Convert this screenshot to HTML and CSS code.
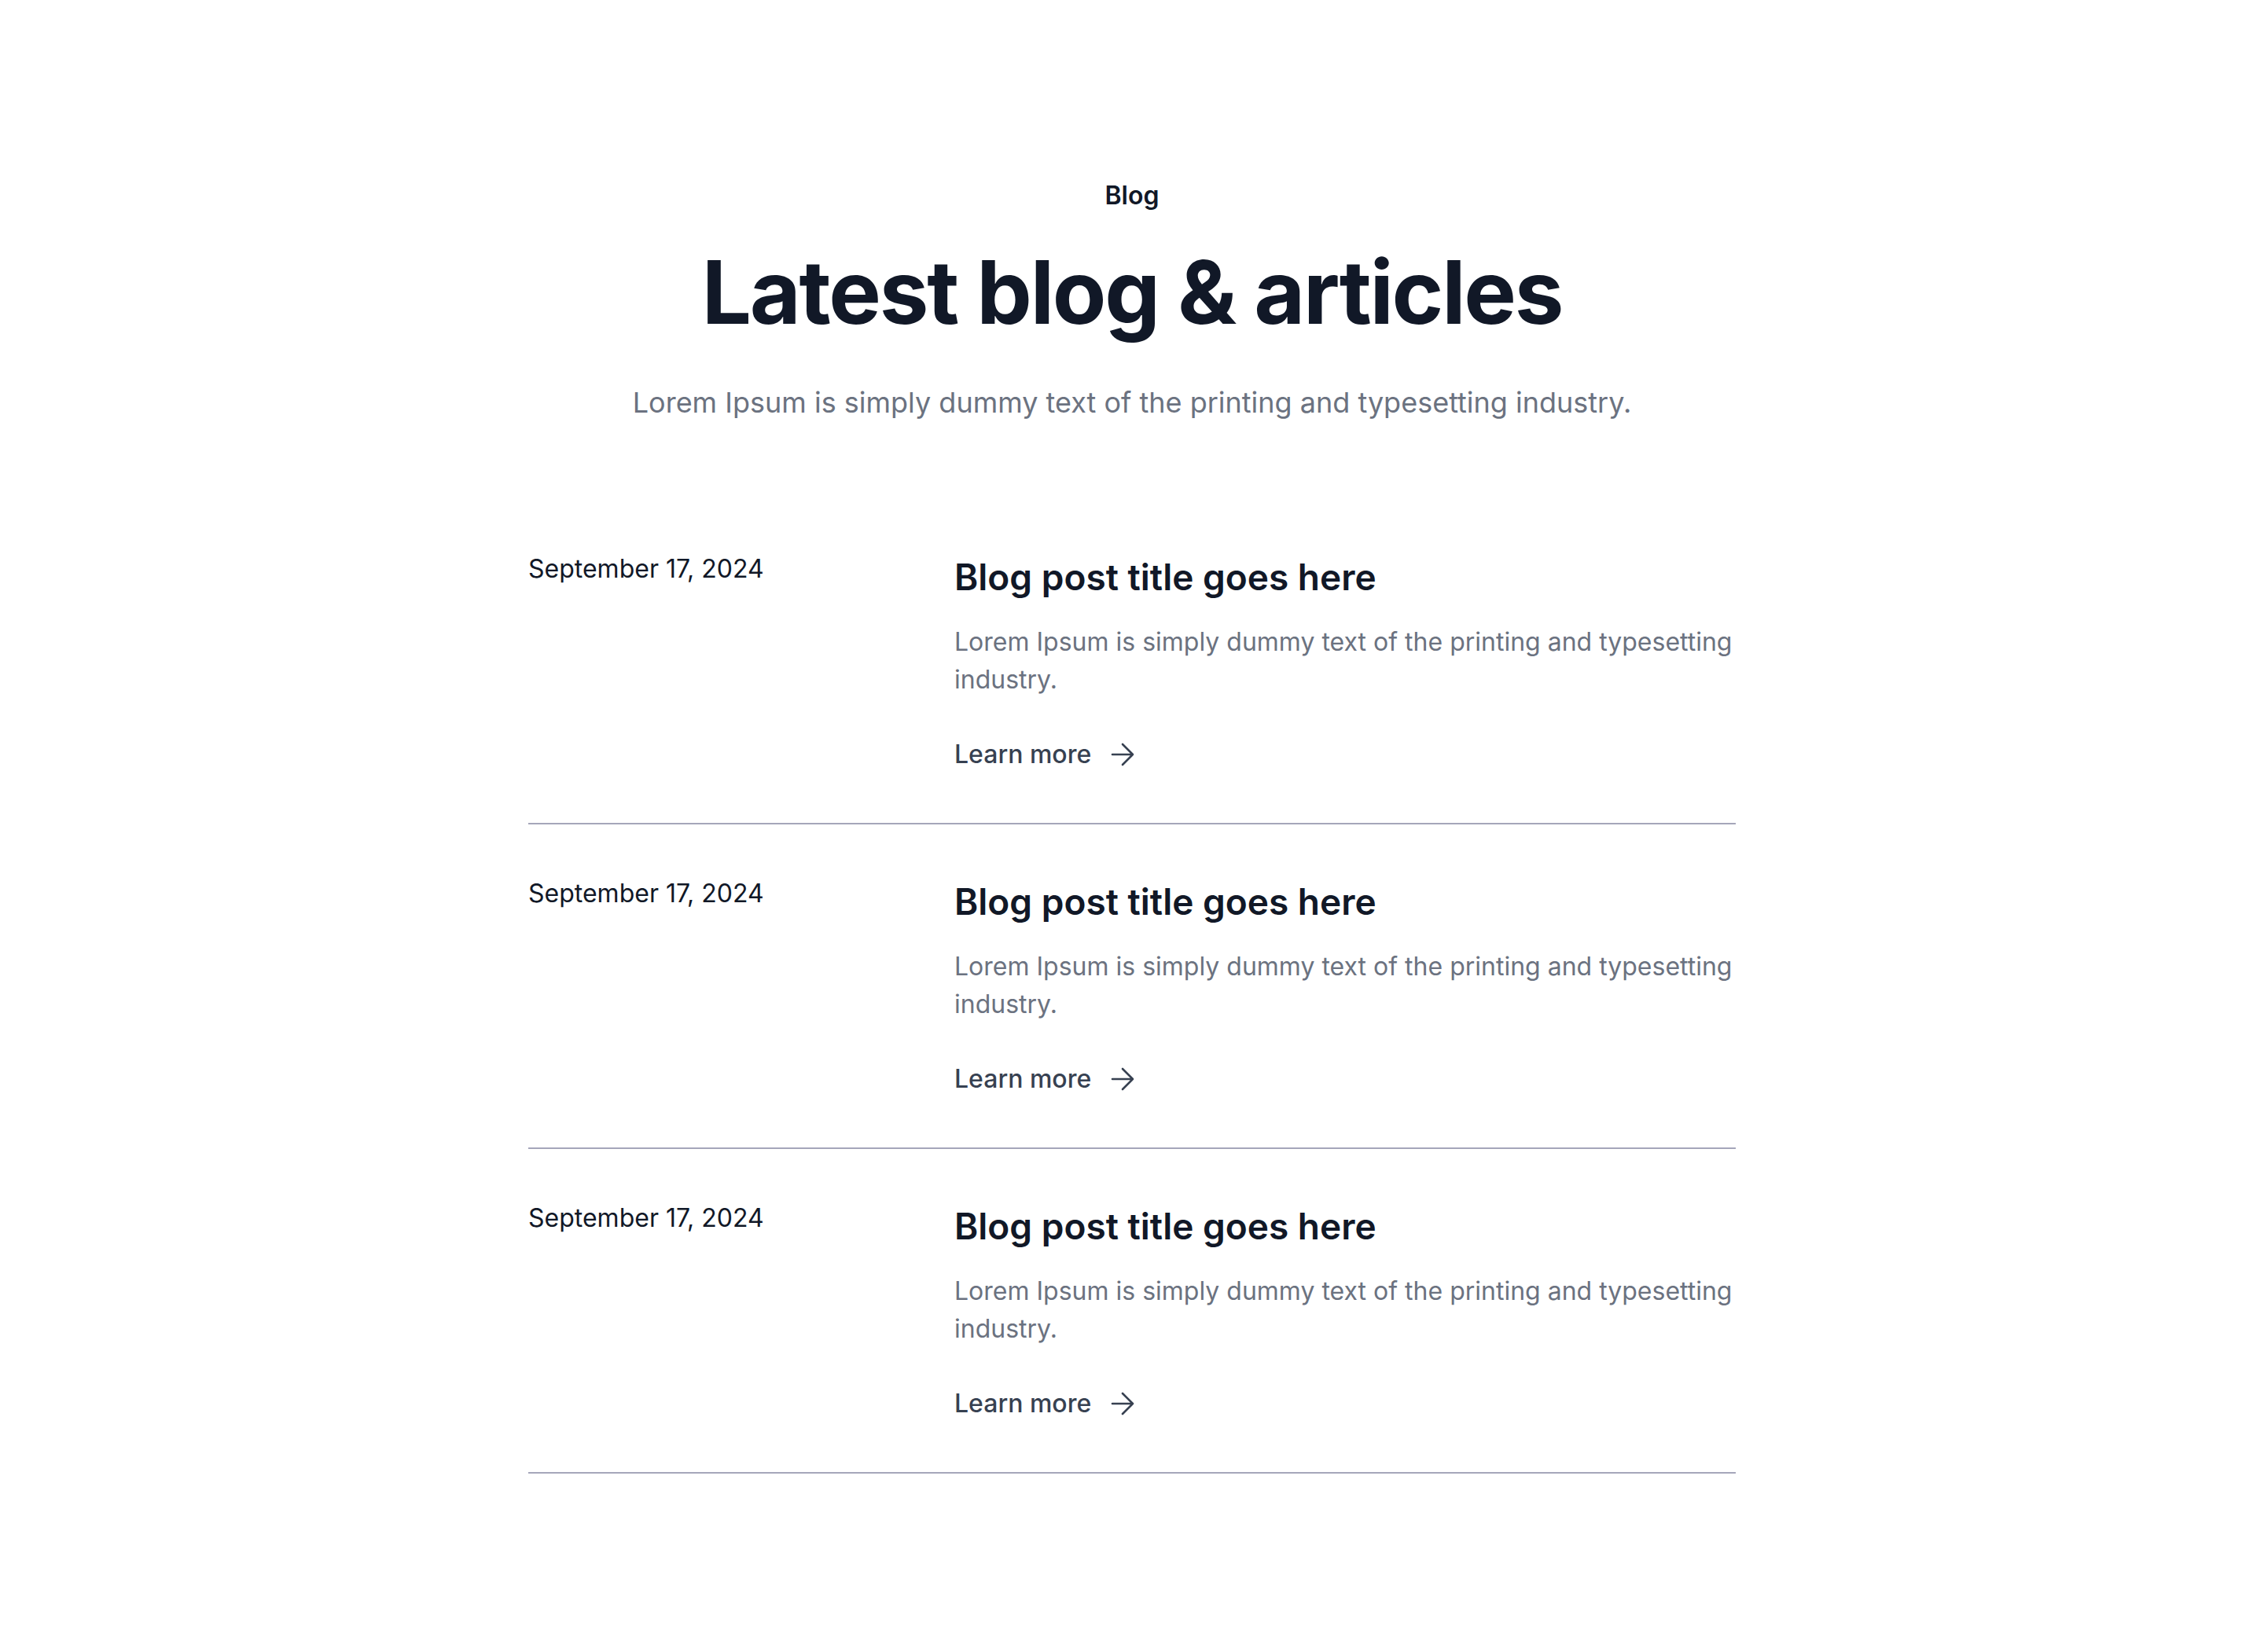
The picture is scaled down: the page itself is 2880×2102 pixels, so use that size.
FILE: index.html
```html
<!DOCTYPE html>
<html lang="en">
<head>
  <meta charset="UTF-8">
  <meta name="viewport" content="width=device-width, initial-scale=1.0">
  <title>Blog - Latest articles</title>
  <link rel="stylesheet" href="styles.css">
</head>
<body>
  <section class="blog">
    <header class="blog-header">
      <p class="eyebrow">Blog</p>
      <h1>Latest blog &amp; articles</h1>
      <p class="lead">Lorem Ipsum is simply dummy text of the printing and typesetting industry.</p>
    </header>

    <div class="post-list">
      <article class="post">
        <time class="post-date" datetime="2024-09-17">September 17, 2024</time>
        <div class="post-body">
          <h2>Blog post title goes here</h2>
          <p>Lorem Ipsum is simply dummy text of the printing and typesetting industry.</p>
          <a class="more" href="#">Learn more
            <svg viewBox="0 0 30 30" aria-hidden="true"><path d="M2 15h26M15 2l13 13-13 13"/></svg>
          </a>
        </div>
      </article>

      <article class="post">
        <time class="post-date" datetime="2024-09-17">September 17, 2024</time>
        <div class="post-body">
          <h2>Blog post title goes here</h2>
          <p>Lorem Ipsum is simply dummy text of the printing and typesetting industry.</p>
          <a class="more" href="#">Learn more
            <svg viewBox="0 0 30 30" aria-hidden="true"><path d="M2 15h26M15 2l13 13-13 13"/></svg>
          </a>
        </div>
      </article>

      <article class="post">
        <time class="post-date" datetime="2024-09-17">September 17, 2024</time>
        <div class="post-body">
          <h2>Blog post title goes here</h2>
          <p>Lorem Ipsum is simply dummy text of the printing and typesetting industry.</p>
          <a class="more" href="#">Learn more
            <svg viewBox="0 0 30 30" aria-hidden="true"><path d="M2 15h26M15 2l13 13-13 13"/></svg>
          </a>
        </div>
      </article>
    </div>
  </section>
</body>
</html>
```

FILE: styles.css
```css
body {
  font-family: Inter, 'Noto Sans', 'Liberation Sans', sans-serif;
  background-color: #ffffff;
  color: #111827;
  margin: 0;
}

.blog {
  max-width: 1536px;
  margin: 0 auto;
  padding: 225px 0 224px;
}

.blog-header {
  text-align: center;
  margin-bottom: 97px;
}

.eyebrow {
  font-size: 32px;
  font-weight: 600;
  line-height: 1.5;
  margin: 0 0 31px;
}

h1 {
  font-size: 112px;
  font-weight: 700;
  line-height: 1.2;
  letter-spacing: -0.02em;
  margin: 0 0 47px;
}

.lead {
  font-size: 36px;
  line-height: 1.5;
  color: #6b7280;
  margin: 0;
}

.post {
  display: grid;
  grid-template-columns: 542px 1fr;
  padding: 64px 0 63px;
  border-bottom: 2px solid #a5a6ba;
}

.post-date {
  font-size: 32px;
  line-height: 1.5;
  color: #111827;
}

.post-body h2 {
  font-size: 46px;
  font-weight: 600;
  line-height: 1.5;
  margin: 0 0 24px;
}

.post-body p {
  font-size: 32px;
  line-height: 1.5;
  color: #6b7280;
  margin: 0 0 47px;
}

.more {
  display: inline-flex;
  align-items: center;
  gap: 25px;
  font-size: 32px;
  font-weight: 500;
  line-height: 1.5;
  color: #374151;
  text-decoration: none;
}

.more svg {
  width: 30px;
  height: 30px;
  fill: none;
  stroke: #374151;
  stroke-width: 2.6;
  stroke-linecap: round;
  stroke-linejoin: round;
}
```
